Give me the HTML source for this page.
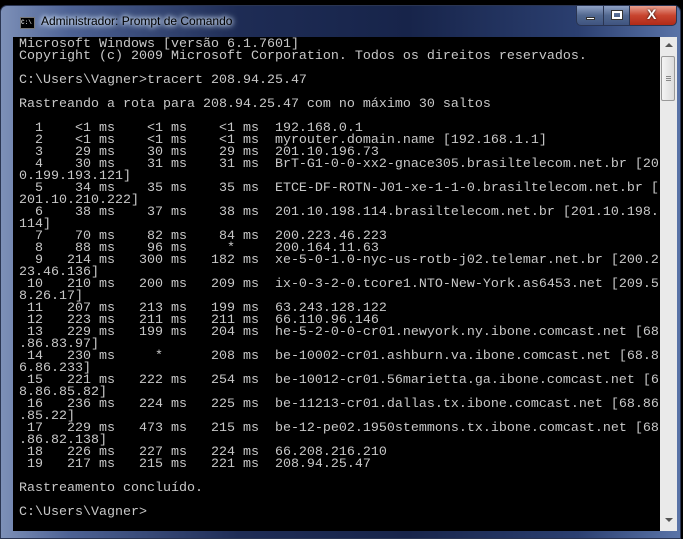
<!DOCTYPE html>
<html><head><meta charset="utf-8"><style>
html,body{margin:0;padding:0;width:683px;height:539px;overflow:hidden;background:#000;}
#win{position:absolute;left:0;top:5px;width:681px;height:534px;border-radius:7px 7px 0 0;
background:linear-gradient(90deg,#7d90b8 0%,#4d6294 10%,#1e2c55 35%,#17244a 60%,#2b3f70 85%,#5a74a8 100%);
border:1px solid #2a3552;box-sizing:border-box;}
#title{position:absolute;left:40px;top:8px;font:12px "Liberation Sans",sans-serif;color:#000;
text-shadow:0 0 8px #cfe0f5,0 0 6px #cfe0f5,0 0 4px #dfeaf7;}
#ico{position:absolute;left:19px;top:11px;width:13px;height:10px;background:#000;border:1px solid #777;
font:bold 6px "Liberation Mono",monospace;color:#ccc;line-height:10px;}
.btn{position:absolute;top:0;height:20px;border:1px solid #2a3552;border-top:none;box-sizing:border-box;}
#bmin{left:575px;width:28px;border-radius:0 0 0 5px;background:linear-gradient(#8fa2c6,#52688f 50%,#3f5480);}
#bmax{left:602px;width:27px;background:linear-gradient(#8fa2c6,#52688f 50%,#3f5480);}
#bcls{left:628px;width:48px;border-radius:0 0 5px 0;background:linear-gradient(#e8a08f,#c8442f 50%,#b02a18);}
#con{position:absolute;left:12px;top:31px;width:647px;height:494px;background:#000;}
#txt{position:absolute;left:6px;top:2px;margin:0;font:13.33px/12px "Liberation Mono",monospace;color:#c8c8c8;white-space:pre;letter-spacing:0;}
#sb{position:absolute;left:659px;top:31px;width:17px;height:494px;background:#eaeaea;}
#thumb{position:absolute;left:1px;top:19px;width:14px;height:45px;background:linear-gradient(90deg,#f4f4f4,#dcdcdc);border:1px solid #999;border-radius:2px;box-sizing:border-box;}
</style></head><body>
<div id="win">
<div id="ico">C:\</div>
<div id="title">Administrador: Prompt de Comando</div>
<div class="btn" id="bmin"><div style="position:absolute;left:9px;top:11px;width:9px;height:3px;background:#fff;border:1px solid #333;box-sizing:border-box"></div></div>
<div class="btn" id="bmax"><div style="position:absolute;left:8px;top:5px;width:10px;height:8px;border:2px solid #fff;outline:1px solid #333;box-sizing:border-box"></div></div>
<div class="btn" id="bcls"><div style="position:absolute;left:17px;top:0;font:bold 14px 'Liberation Sans',sans-serif;color:#fff;text-shadow:0 0 2px #000">X</div></div>
<div id="con"><pre id="txt">Microsoft Windows [versão 6.1.7601]
Copyright (c) 2009 Microsoft Corporation. Todos os direitos reservados.

C:\Users\Vagner&gt;tracert 208.94.25.47

Rastreando a rota para 208.94.25.47 com no máximo 30 saltos

  1    &lt;1 ms    &lt;1 ms    &lt;1 ms  192.168.0.1
  2    &lt;1 ms    &lt;1 ms    &lt;1 ms  myrouter.domain.name [192.168.1.1]
  3    29 ms    30 ms    29 ms  201.10.196.73
  4    30 ms    31 ms    31 ms  BrT-G1-0-0-xx2-gnace305.brasiltelecom.net.br [20
0.199.193.121]
  5    34 ms    35 ms    35 ms  ETCE-DF-ROTN-J01-xe-1-1-0.brasiltelecom.net.br [
201.10.210.222]
  6    38 ms    37 ms    38 ms  201.10.198.114.brasiltelecom.net.br [201.10.198.
114]
  7    70 ms    82 ms    84 ms  200.223.46.223
  8    88 ms    96 ms     *     200.164.11.63
  9   214 ms   300 ms   182 ms  xe-5-0-1.0-nyc-us-rotb-j02.telemar.net.br [200.2
23.46.136]
 10   210 ms   200 ms   209 ms  ix-0-3-2-0.tcore1.NTO-New-York.as6453.net [209.5
8.26.17]
 11   207 ms   213 ms   199 ms  63.243.128.122
 12   223 ms   211 ms   211 ms  66.110.96.146
 13   229 ms   199 ms   204 ms  he-5-2-0-0-cr01.newyork.ny.ibone.comcast.net [68
.86.83.97]
 14   230 ms     *      208 ms  be-10002-cr01.ashburn.va.ibone.comcast.net [68.8
6.86.233]
 15   221 ms   222 ms   254 ms  be-10012-cr01.56marietta.ga.ibone.comcast.net [6
8.86.85.82]
 16   236 ms   224 ms   225 ms  be-11213-cr01.dallas.tx.ibone.comcast.net [68.86
.85.22]
 17   229 ms   473 ms   215 ms  be-12-pe02.1950stemmons.tx.ibone.comcast.net [68
.86.82.138]
 18   226 ms   227 ms   224 ms  66.208.216.210
 19   217 ms   215 ms   221 ms  208.94.25.47

Rastreamento concluído.

C:\Users\Vagner&gt;</pre></div>
<div id="sb">
<div style="position:absolute;left:5px;top:6px;width:0;height:0;border-left:4px solid transparent;border-right:4px solid transparent;border-bottom:4px solid #555"></div>
<div id="thumb"><div style="position:absolute;left:4px;top:19px;width:5px;height:1px;background:#888;box-shadow:0 2px #888,0 4px #888"></div></div>
<div style="position:absolute;left:5px;top:481px;width:0;height:0;border-left:4px solid transparent;border-right:4px solid transparent;border-top:4px solid #555"></div>
</div>
</div>
</body></html>
